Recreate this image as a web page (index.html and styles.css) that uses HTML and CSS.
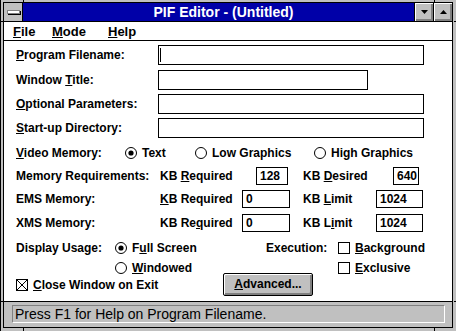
FILE: index.html
```html
<!DOCTYPE html>
<html>
<head>
<meta charset="utf-8">
<title>PIF Editor</title>
<link rel="stylesheet" href="styles.css">
</head>
<body>
<div class="win">
  <div class="inner">
    <div class="titlebar">
      <div class="sysbox"><span class="sysbar"></span></div>
      <div class="caption">PIF Editor - (Untitled)</div>
      <div class="tbtn"><svg width="7" height="4" viewBox="0 0 7 4"><polygon points="0,0 7,0 3.5,4" fill="#000"/></svg></div>
      <div class="tbtn"><svg width="7" height="4" viewBox="0 0 7 4"><polygon points="0,4 7,4 3.5,0" fill="#000"/></svg></div>
    </div>
    <div class="menubar">
      <span class="menu m-file"><u>F</u>ile</span>
      <span class="menu m-mode"><u>M</u>ode</span>
      <span class="menu"><u>H</u>elp</span>
    </div>
    <div class="client">
      <div class="row r1">
        <span class="lbl"><u>P</u>rogram Filename:</span>
        <div class="field f-long"><span class="caret"></span></div>
      </div>
      <div class="row r2">
        <span class="lbl">Window <u>T</u>itle:</span>
        <div class="field f-title"></div>
      </div>
      <div class="row r3">
        <span class="lbl"><u>O</u>ptional Parameters:</span>
        <div class="field f-long"></div>
      </div>
      <div class="row r4">
        <span class="lbl"><u>S</u>tart-up Directory:</span>
        <div class="field f-long"></div>
      </div>
      <div class="row r5">
        <span class="lbl-video"><u>V</u>ideo Memory:</span>
        <span class="opt opt-text"><svg class="ico" width="12" height="12" viewBox="0 0 12 12"><circle cx="6" cy="6" r="5.5" fill="#fff" stroke="#000"/><circle cx="6" cy="6" r="2.6" fill="#000"/></svg>Text</span>
        <span class="opt opt-low"><svg class="ico" width="12" height="12" viewBox="0 0 12 12"><circle cx="6" cy="6" r="5.5" fill="#fff" stroke="#000"/></svg>Low Graphics</span>
        <span class="opt"><svg class="ico" width="12" height="12" viewBox="0 0 12 12"><circle cx="6" cy="6" r="5.5" fill="#fff" stroke="#000"/></svg>High Graphics</span>
      </div>
      <div class="row r6">
        <span class="lbl-mem">Memory Requirements:</span>
        <span class="kb kb-req6">KB <u>R</u>equired</span>
        <div class="num n-128">128</div>
        <span class="kb2 kb-des">KB <u>D</u>esired</span>
        <div class="num n-640">640</div>
      </div>
      <div class="row r7">
        <span class="lbl-mem">EMS Memory:</span>
        <span class="kb kb-req"><u>K</u>B Required</span>
        <div class="num n-wide">0</div>
        <span class="kb2 kb-lim">KB <u>L</u>imit</span>
        <div class="num n-lim">1024</div>
      </div>
      <div class="row r8">
        <span class="lbl-mem">XMS Memory:</span>
        <span class="kb kb-req">KB Re<u>q</u>uired</span>
        <div class="num n-wide">0</div>
        <span class="kb2 kb-lim">KB L<u>i</u>mit</span>
        <div class="num n-lim">1024</div>
      </div>
      <div class="row r9">
        <span class="lbl-disp">Display Usage:</span>
        <span class="opt opt-disp"><svg class="ico" width="12" height="12" viewBox="0 0 12 12"><circle cx="6" cy="6" r="5.5" fill="#fff" stroke="#000"/><circle cx="6" cy="6" r="2.6" fill="#000"/></svg>F<u>u</u>ll Screen</span>
        <span class="lbl-exec">Execution:</span>
        <span class="opt"><svg class="ico" width="12" height="12" viewBox="0 0 12 12"><rect x="0.5" y="0.5" width="11" height="11" fill="#fff" stroke="#000"/></svg><u>B</u>ackground</span>
      </div>
      <div class="row r10">
        <span class="lbl-disp"></span>
        <span class="opt opt-disp"><svg class="ico" width="12" height="12" viewBox="0 0 12 12"><circle cx="6" cy="6" r="5.5" fill="#fff" stroke="#000"/></svg><u>W</u>indowed</span>
        <span class="lbl-exec"></span>
        <span class="opt"><svg class="ico" width="12" height="12" viewBox="0 0 12 12"><rect x="0.5" y="0.5" width="11" height="11" fill="#fff" stroke="#000"/></svg><u>E</u>xclusive</span>
      </div>
      <div class="row r11">
        <span class="opt opt-close"><svg class="ico" width="12" height="12" viewBox="0 0 12 12"><rect x="0.5" y="0.5" width="11" height="11" fill="#fff" stroke="#000"/><path d="M1 1 L11 11 M11 1 L1 11" stroke="#000" stroke-width="1"/></svg><u>C</u>lose Window on Exit</span>
        <div class="btn"><u>A</u>dvanced...</div>
      </div>
    </div>
    <div class="status">
      <div class="status-field">Press F1 for Help on Program Filename.</div>
    </div>
  </div>
  <span class="notch nv n-t1"></span>
  <span class="notch nv n-t2"></span>
  <span class="notch nv n-b1"></span>
  <span class="notch nv n-b2"></span>
  <span class="notch nh n-l1"></span>
  <span class="notch nh n-r1"></span>
  <span class="notch nh n-l2"></span>
  <span class="notch nh n-r2"></span>
</div>
</body>
</html>
```
FILE: styles.css
```css
* { box-sizing: border-box; }
html, body { margin: 0; padding: 0; }
body {
  width: 456px;
  height: 331px;
  overflow: hidden;
  background: #c0c0c0;
  font-family: "Liberation Sans", Arial, sans-serif;
  font-weight: bold;
  font-size: 12px;
  color: #000;
}
u { text-decoration: underline; text-underline-offset: 1px; text-decoration-thickness: 1px; }

.win {
  position: relative;
  width: 456px;
  height: 331px;
  background: #c0c0c0;
  border-left: 1px solid #000;
  padding: 2px 3px 3px 2px;
}
.inner {
  height: 100%;
  border: 1px solid #000;
  display: flex;
  flex-direction: column;
  background: #fff;
}

/* title bar */
.titlebar {
  height: 19px;
  flex: none;
  border-bottom: 1px solid #000;
  display: flex;
}
.sysbox {
  width: 19px;
  border-right: 1px solid #000;
  background: #c0c0c0;
  display: flex;
  align-items: center;
  justify-content: center;
}
.sysbar {
  width: 13px;
  height: 4px;
  background: #fff;
  border: 1px solid #808080;
  box-shadow: 1px 1px 0 #000;
}
.caption {
  flex: 1;
  background: #0000a8;
  color: #fff;
  font-size: 14px;
  line-height: 18px;
  text-align: center;
  padding-left: 10px;
}
.tbtn {
  width: 19px;
  border-left: 1px solid #000;
  background: #c0c0c0;
  box-shadow: inset 1px 1px 0 #fff, inset -1px -1px 0 #808080, inset -2px -2px 0 #808080;
  display: flex;
  align-items: center;
  justify-content: center;
  padding-bottom: 1px;
}
.tbtn svg { display: block; }

/* menu */
.menubar {
  height: 19px;
  flex: none;
  border-bottom: 1px solid #000;
  display: flex;
  align-items: center;
  padding-left: 9px;
  font-size: 13px;
}
.m-file { width: 39px; }
.m-mode { width: 56px; }

/* client */
.client {
  height: 261px;
  flex: none;
  border-bottom: 1px solid #000;
  padding-left: 12px;
}
.row { display: flex; align-items: center; white-space: nowrap; }
.r1 { margin-top: 4px; height: 20px; }
.r2 { margin-top: 5px; height: 20px; }
.r3 { margin-top: 4px; height: 20px; }
.r4 { margin-top: 4px; height: 20px; }
.r5 { margin-top: 5px; height: 20px; }
.r6 { margin-top: 4px; height: 18px; }
.r7 { margin-top: 5px; height: 18px; }
.r8 { margin-top: 6px; height: 18px; }
.r9 { margin-top: 6px; height: 19px; }
.r10 { margin-top: 1px; height: 19px; }
.r11 { margin-top: -4px; height: 23px; }

.lbl { width: 142px; }
.field {
  height: 20px;
  border: 1px solid #000;
  display: flex;
  align-items: center;
}
.f-long { width: 266px; }
.f-title { width: 210px; }
.caret { width: 1px; height: 14px; background: #000; margin-left: 1px; }

.lbl-video { width: 109px; }
.opt { display: flex; align-items: center; }
.ico { display: block; flex: none; margin-right: 5px; }
.opt-text { width: 70px; }
.opt-low { width: 119px; }

.lbl-mem { width: 144px; }
.kb-req6 { width: 96px; }
.kb-req { width: 82px; }
.num {
  height: 18px;
  border: 1px solid #000;
  padding-left: 3px;
  line-height: 16px;
}
.n-128 { width: 32px; }
.n-640 { width: 26px; }
.n-wide { width: 48px; }
.n-lim { width: 47px; }
.kb-des { width: 90px; margin-left: 15px; }
.kb-lim { width: 73px; margin-left: 13px; }

.lbl-disp { width: 99px; }
.opt-disp { width: 151px; }
.lbl-exec { width: 72px; }

.opt-close { width: 207px; }
.btn {
  width: 90px;
  height: 23px;
  border: 1px solid #000;
  border-radius: 2px;
  background: #c0c0c0;
  box-shadow: inset 1px 1px 0 #fff, inset -1px -1px 0 #808080, inset -2px -2px 0 #808080;
  text-align: center;
  line-height: 20px;
}

/* status */
.status {
  flex: 1;
  background: #c0c0c0;
  padding: 3px 7px 4px 8px;
}
.status-field {
  height: 18px;
  border-top: 1px solid #808080;
  border-left: 1px solid #808080;
  border-bottom: 1px solid #fff;
  border-right: 1px solid #fff;
  font-weight: normal;
  font-size: 14px;
  line-height: 16px;
  padding-left: 2px;
  white-space: nowrap;
}

/* frame corner notches */
.notch { position: absolute; background: #000; }
.nv { width: 1px; }
.nh { height: 1px; }
.n-t1 { left: 22px; top: 0; height: 2px; }
.n-t2 { left: 433px; top: 0; height: 2px; }
.n-b1 { left: 22px; top: 328px; height: 3px; }
.n-b2 { left: 433px; top: 328px; height: 3px; }
.n-l1 { left: 0; top: 21px; width: 3px; }
.n-r1 { left: 453px; top: 21px; width: 3px; }
.n-l2 { left: 0; top: 301px; width: 3px; }
.n-r2 { left: 453px; top: 301px; width: 3px; }
```
